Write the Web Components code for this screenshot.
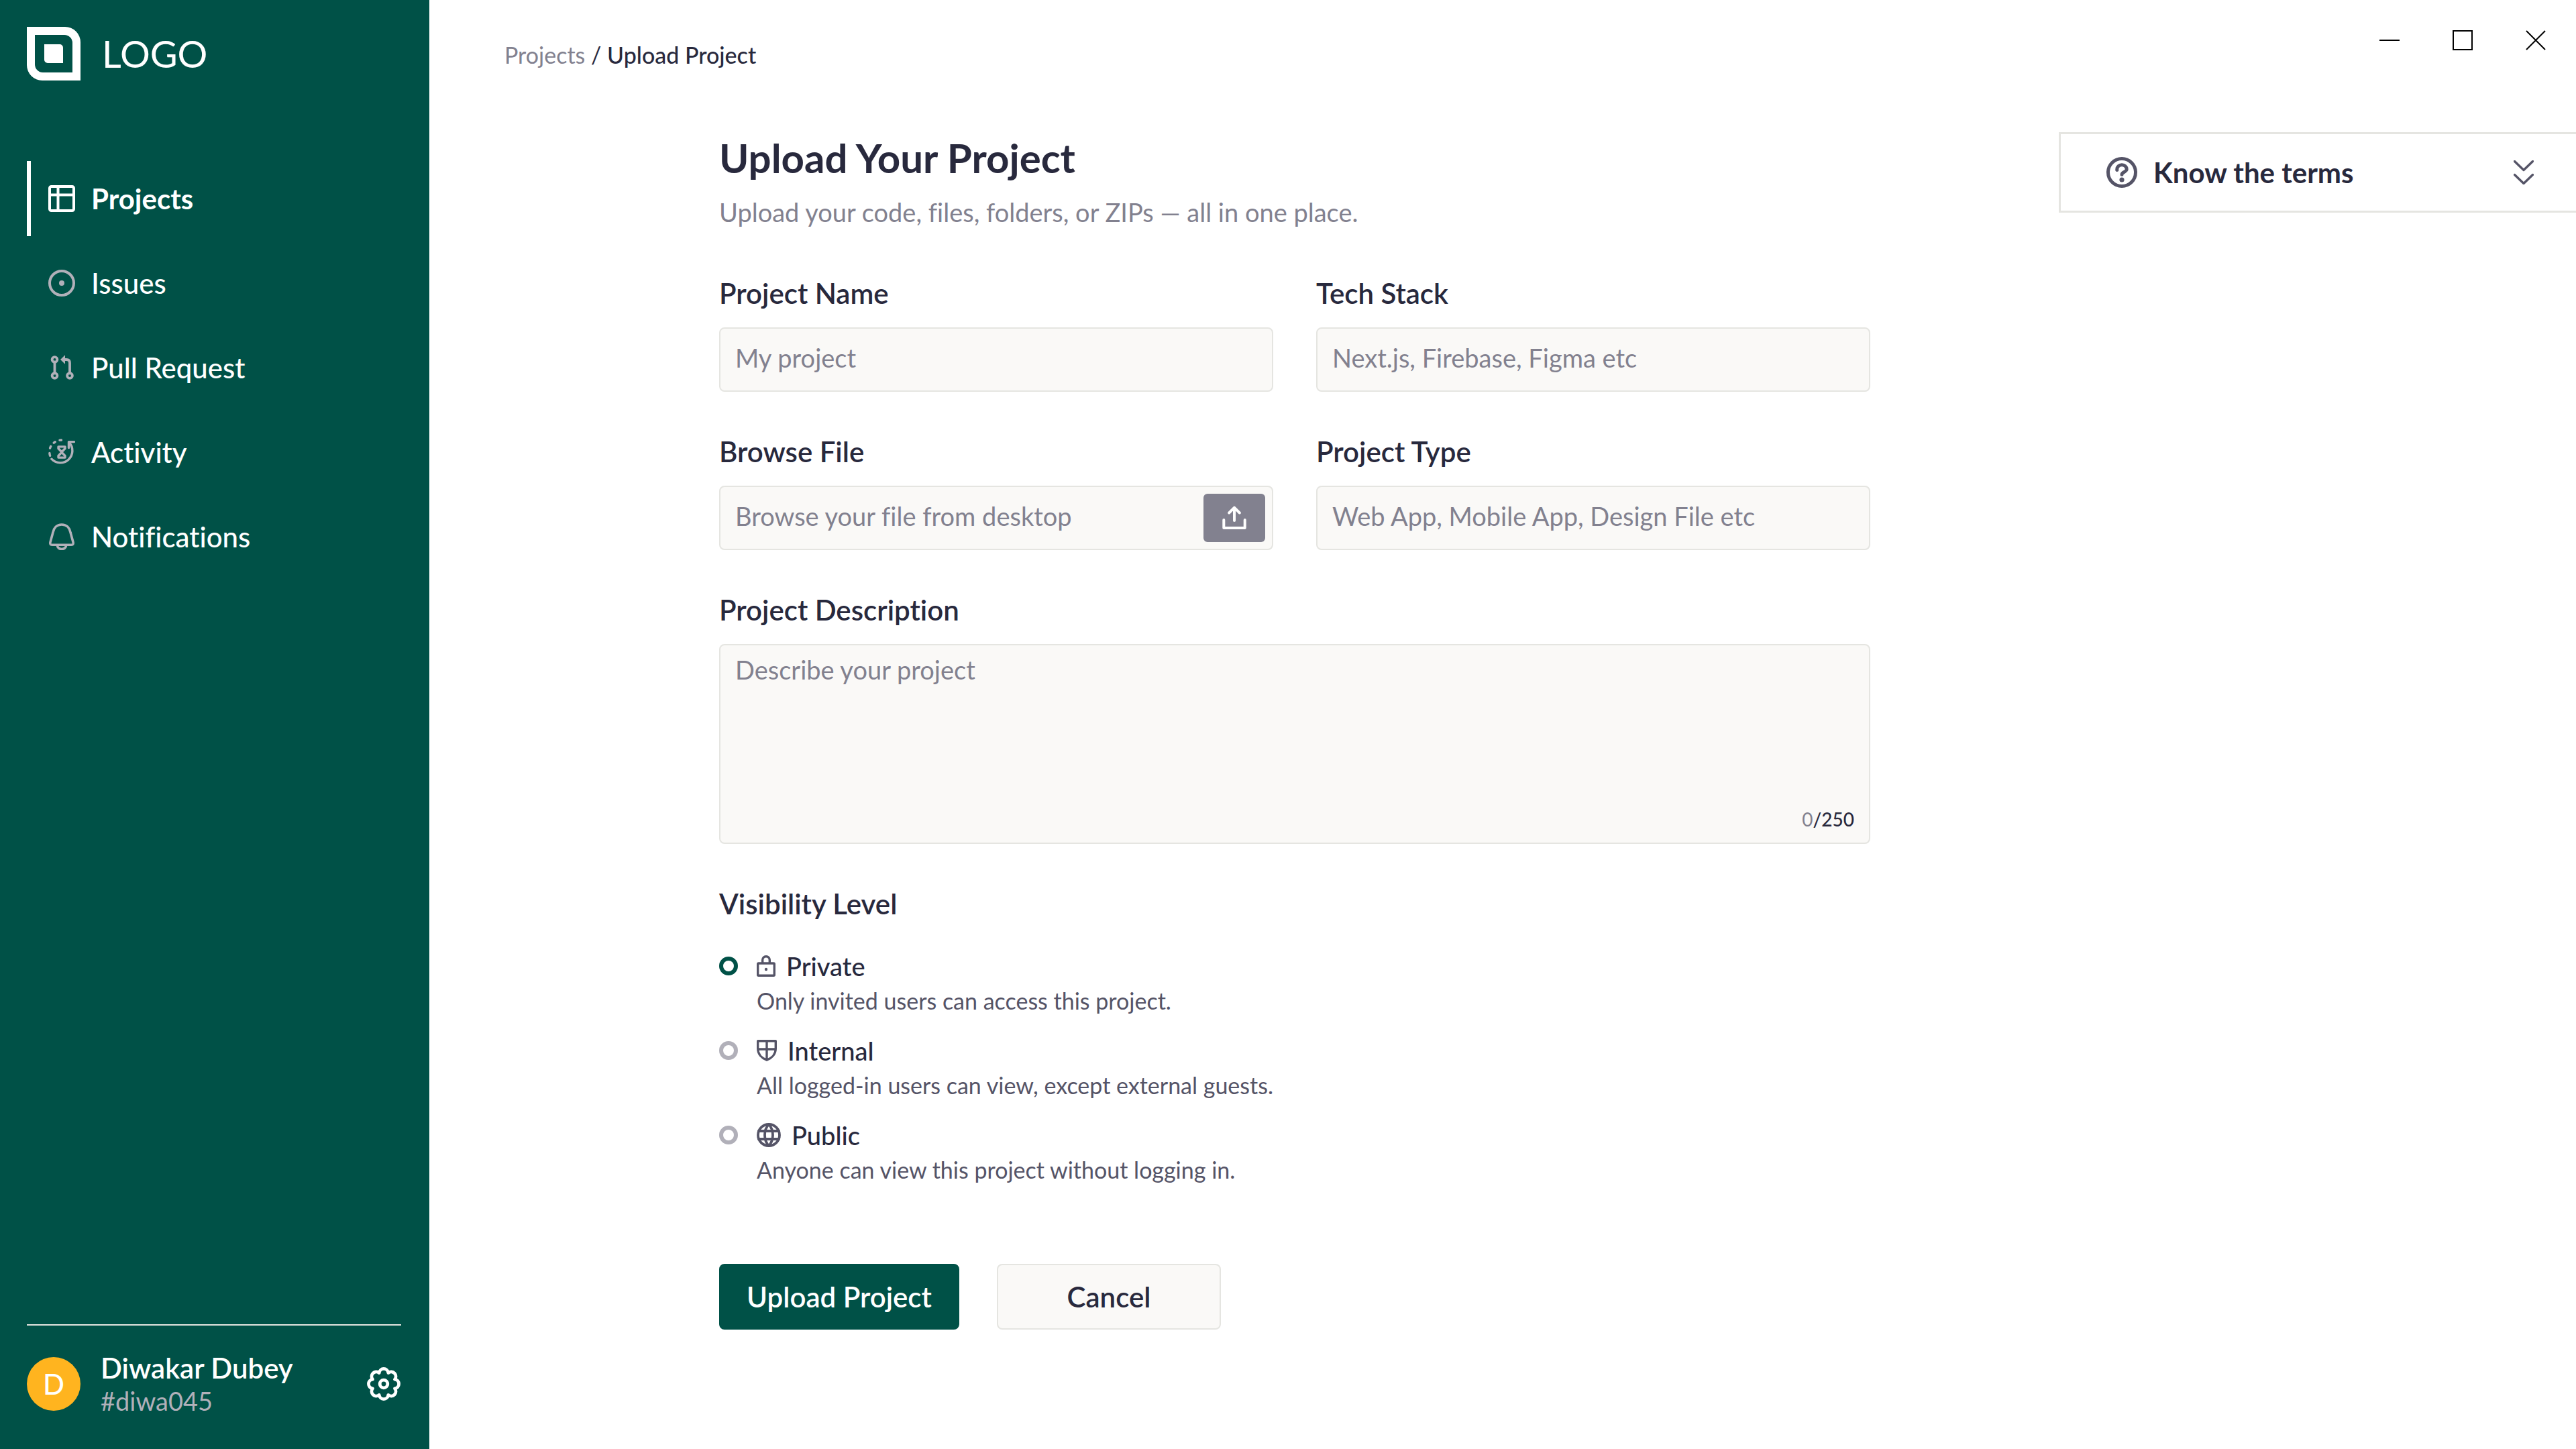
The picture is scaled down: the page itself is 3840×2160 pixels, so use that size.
<!DOCTYPE html>
<html lang="en">
<head>
<meta charset="utf-8">
<title>Upload Project</title>
<style>
  :root {
    --green: #005147;
    --ink: #28293d;
    --body: #555467;
    --muted: #82818f;
    --faint: #b1b0b9;
    --line: #e5e5e1;
    --fill: #faf9f7;
  }
  body { margin: 0; background: #fff; color: var(--ink); font-family: Lato, "Open Sans", sans-serif; font-variant-ligatures: none; }
</style>
</head>
<body>
<app-shell>
  <side-bar slot="side">
    <nav-item icon="projects" active>Projects</nav-item>
    <nav-item icon="issues">Issues</nav-item>
    <nav-item icon="pull">Pull Request</nav-item>
    <nav-item icon="activity">Activity</nav-item>
    <nav-item icon="bell">Notifications</nav-item>
    <user-card slot="footer" name="Diwakar Dubey" handle="#diwa045"></user-card>
  </side-bar>
  <top-bar slot="top"></top-bar>
  <project-form></project-form>
  <terms-panel slot="aside">Know the terms</terms-panel>
</app-shell>

<script>
const gearPath = (() => {
  const pts = [];
  for (let i = 0; i < 8; i++) {
    const a = (22.5 + 45 * i) * Math.PI / 180;
    pts.push((26 + 17.8 * Math.cos(a)).toFixed(2) + ' ' + (26 + 17.8 * Math.sin(a)).toFixed(2));
  }
  return 'M' + pts[7] + pts.map(p => 'A6.85 6.85 0 0 1 ' + p).join('') + 'Z';
})();

const ICONS = {
  logo: [80, 80, '<path fill="currentColor" fill-rule="evenodd" stroke="none" d="M0 0H57A23 23 0 0 1 80 23V80H23A23 23 0 0 1 0 57ZM12 12V56A12 12 0 0 0 24 68H68V24A12 12 0 0 0 56 12ZM26 26H49A5 5 0 0 1 54 31V54H31A5 5 0 0 1 26 49Z"/>'],
  projects: [40, 40, '<rect x="2" y="2" width="36" height="36" rx="2.5"/><path d="M14.500 2V38M2 14.500H38"/>', 4],
  issues: [40, 40, '<circle cx="20" cy="20" r="18"/><circle cx="20" cy="20" r="4" fill="currentColor" stroke="none"/>', 4],
  pull: [40, 40, '<circle cx="9.500" cy="8" r="3.900"/><circle cx="9.500" cy="32" r="3.900"/><circle cx="32" cy="32" r="3.900"/><path d="M9.500 11.500V28.500M24 8H27Q32 8 32 13V28.500"/><path d="M18 8L25 1.300V14.700Z" fill="currentColor" stroke="none"/>', 3.8],
  activity: [40, 40, '<path d="M4.800 30.200A18 18 0 1 0 31 5.500"/><path d="M38.500 4.600H30.500V13.500M1.900 21.500Q2 23.500 2.600 25.300M2.600 14Q3 12.500 3.700 11.400M8.300 6.200L10.200 4.700M17 2.100L19.500 2"/><path d="M15 11.900H25V14.500L20 19.700L15 14.500ZM15 28.100H25V25.500L20 20.300L15 25.500Z"/>', 3.4],
  bell: [40, 40, '<path d="M20 2C12.500 2 8.200 7 7 13.500L2.900 28.500Q2 32.200 5.600 32.200H34.400Q38 32.200 37.100 28.500L33 13.500C31.800 7 27.500 2 20 2Z"/><path d="M13.500 33.500A6.500 5 0 0 0 26.500 33.500"/>', 3.6],
  gear: [52, 52, '<path d="' + gearPath + '"/><circle cx="26" cy="26" r="5.800"/>', 4.8],
  minimize: [30, 30, '<path d="M0 15H30"/>', 2],
  maximize: [30, 30, '<path stroke-linejoin="miter" d="M1 1H29V29H1Z"/>', 2],
  close: [30, 30, '<path d="M1 1L29 29M29 1L1 29"/>', 2],
  help: [46, 46, '<circle cx="23" cy="23" r="20.500"/><path d="M15.800 19.500V18.200A7.200 6.500 0 0 1 30.200 18.200C30.200 22.500 23 22.500 23 26.300"/><circle cx="23" cy="34" r="3.600" fill="currentColor" stroke="none"/>', 5],
  chevrons: [30, 36, '<path d="M1.500 1.500L15 14.500L28.500 1.500M1.500 21.500L15 34.500L28.500 21.500"/>', 3.4],
  upload: [36, 36, '<path d="M2.300 21V33H33.700V21M18 3V22M10.200 10.500L18 2.700L25.800 10.500"/>', 4],
  lock: [28, 32, '<rect x="1.700" y="12" width="24.600" height="18.300" rx="1"/><path d="M8.700 11V7A5.300 5.300 0 0 1 19.300 7V11"/><circle cx="14" cy="21" r="2.200" fill="currentColor" stroke="none"/>', 3.4],
  shield: [30, 32, '<path d="M1.700 1.700H28.300V13C28.300 21.500 22.500 27.500 15 30.200C7.500 27.500 1.700 21.500 1.700 13ZM15 1.700V30M1.700 14H28.300"/>', 3.4],
  globe: [36, 36, '<circle cx="18" cy="18" r="16"/><path d="M3 12H33M3 24H33M18 2C10 10.500 10 25.500 18 34C26 25.500 26 10.500 18 2Z"/>', 3.8]
};
const icon = name => {
  const [w, h, body, sw = 0] = ICONS[name];
  return `<svg width="${w}" height="${h}" viewBox="0 0 ${w} ${h}" fill="none" stroke="currentColor" stroke-width="${sw}" stroke-linecap="${/minimize|close/.test(name) ? 'butt' : 'round'}" stroke-linejoin="round" aria-hidden="true">${body}</svg>`;
};

const BASE = `
  *, *::before { box-sizing: border-box; }
  svg { display: block; flex: none; }
  button, input, textarea { font: inherit; font-variant-ligatures: none; color: inherit; margin: 0; }
  button { cursor: pointer; background: none; border: 0; padding: 0; }
  a { color: inherit; text-decoration: none; }
`;
const define = (name, render) => customElements.define(name, class extends HTMLElement {
  connectedCallback() {
    if (this.shadowRoot) return;
    const [css, html] = render(this);
    this.attachShadow({ mode: 'open' }).innerHTML = `<style>${BASE}${css}</style>${html}`;
  }
});

define('app-shell', () => [`
  :host { display: flex; min-height: 100vh; }
  .page { flex: 1; min-width: 0; display: flex; flex-direction: column; }
  .body { display: flex; align-items: flex-start; gap: 281px; padding: 0 0 64px 432px; }
  main { flex: 1; min-width: 0; }
`, `
  <slot name="side"></slot>
  <div class="page">
    <slot name="top"></slot>
    <div class="body"><main><slot></slot></main><slot name="aside"></slot></div>
  </div>
`]);

define('side-bar', () => [`
  :host { display: flex; flex-direction: column; flex: none; width: 640px; padding: 40px 42px 0 40px; box-sizing: border-box; background: var(--green); color: #fff; }
  .brand { display: flex; align-items: center; gap: 32px; font-size: 56px; line-height: 80px; }
  nav { display: flex; flex-direction: column; gap: 14px; margin-top: 120px; }
  footer { margin-top: auto; border-top: 2px solid var(--line); padding: 38px 0 48px; }
`, `
  <div class="brand">${icon('logo')}<span>LOGO</span></div>
  <nav aria-label="Main"><slot></slot></nav>
  <footer><slot name="footer"></slot></footer>
`]);

define('nav-item', el => [`
  :host { display: block; }
  a { display: flex; align-items: center; gap: 24px; height: 112px; padding-left: 26px; border-left: 6px solid transparent; font-size: 42px; font-weight: 500; line-height: 50px; }
  svg { color: var(--faint); }
  :host([active]) a { border-color: #fff; font-weight: 700; }
  :host([active]) svg { color: #fff; }
`, `<a href="#"${el.hasAttribute('active') ? ' aria-current="page"' : ''}>${icon(el.getAttribute('icon'))}<span><slot></slot></span></a>`]);

define('user-card', el => [`
  :host { display: flex; align-items: center; gap: 30px; }
  .avatar { flex: none; width: 80px; height: 80px; border-radius: 50%; background: #ffb41f; font-size: 42px; font-weight: 500; line-height: 80px; text-align: center; }
  .who { flex: 1; min-width: 0; }
  .name { font-size: 42px; font-weight: 600; line-height: 50px; }
  .handle { font-size: 38px; line-height: 48px; color: var(--faint); }
`, `
  <div class="avatar">${el.getAttribute('name')[0]}</div>
  <div class="who"><div class="name">${el.getAttribute('name')}</div><div class="handle">${el.getAttribute('handle')}</div></div>
  <button type="button" aria-label="Settings">${icon('gear')}</button>
`]);

define('top-bar', () => [`
  :host { display: flex; align-items: flex-start; justify-content: space-between; height: 197px; padding: 45px 45px 0 112px; box-sizing: border-box; }
  nav { padding-top: 17px; font-size: 34px; line-height: 40px; }
  nav a { color: var(--muted); }
  nav span { font-weight: 500; }
  .controls { display: flex; gap: 79px; color: #000; }
`, `
  <nav aria-label="Breadcrumb"><a href="#">Projects</a> / <span>Upload Project</span></nav>
  <div class="controls">
    <button type="button" aria-label="Minimize">${icon('minimize')}</button>
    <button type="button" aria-label="Maximize">${icon('maximize')}</button>
    <button type="button" aria-label="Close">${icon('close')}</button>
  </div>
`]);

define('terms-panel', () => [`
  :host { display: block; flex: none; width: 771px; }
  button { display: flex; align-items: center; gap: 24px; width: 100%; height: 120px; padding: 0 63px 0 68px; border: 3px solid var(--line); border-right: 0; background: #fff; color: var(--body); font-size: 42px; font-weight: 700; line-height: 50px; text-align: left; }
  span { flex: 1; color: var(--ink); }
`, `<button type="button" aria-expanded="false">${icon('help')}<span><slot></slot></span>${icon('chevrons')}</button>`]);

define('form-field', el => [`
  :host { display: block; }
  label { display: block; margin-bottom: 26px; font-size: 42px; font-weight: 600; line-height: 50px; }
  .box { display: flex; align-items: center; position: relative; border: 2px solid var(--line); border-radius: 8px; background: var(--fill); font-size: 38px; line-height: 46px; }
  input, textarea { flex: 1; min-width: 0; border: 0; outline: 0; background: none; resize: none; }
  input { height: 92px; padding: 0 22px 6px; }
  textarea { height: 294px; padding: 13px 22px; }
  ::placeholder { color: var(--muted); opacity: 1; }
  .count { position: absolute; right: 22px; bottom: 18px; font-size: 28px; font-weight: 500; line-height: 34px; }
  .count span { color: var(--muted); font-weight: 400; }
`, `
  <label for="control">${el.getAttribute('label')}</label>
  <div class="box">${el.hasAttribute('limit')
    ? `<textarea id="control" maxlength="${el.getAttribute('limit')}" placeholder="${el.getAttribute('hint')}"></textarea><div class="count"><span>0</span>/${el.getAttribute('limit')}</div>`
    : `<input id="control" type="text" placeholder="${el.getAttribute('hint')}"><slot name="action"></slot>`}</div>
`]);

define('browse-button', () => [`
  :host { display: block; flex: none; margin-right: 10px; }
  button { display: flex; align-items: center; justify-content: center; width: 92px; height: 72px; border-radius: 6px; background: var(--muted); color: #fff; }
`, `<button type="button" aria-label="Browse files">${icon('upload')}</button>`]);

const LEVELS = [
  ['private', 'lock', 'Private', 'Only invited users can access this project.'],
  ['internal', 'shield', 'Internal', 'All logged-in users can view, except external guests.'],
  ['public', 'globe', 'Public', 'Anyone can view this project without logging in.']
];
define('visibility-options', () => [`
  :host { display: block; }
  fieldset { margin: 0; border: 0; padding: 0; display: flex; flex-direction: column; gap: 32px; }
  legend { padding: 0; margin-bottom: 46px; font-size: 42px; font-weight: 600; line-height: 50px; }
  .option { display: grid; grid-template-columns: 28px 1fr; column-gap: 28px; row-gap: 10px; align-items: center; }
  input { appearance: none; width: 28px; height: 28px; border: 6px solid var(--faint); border-radius: 50%; }
  input:checked { border-color: var(--green); }
  label { display: flex; align-items: center; gap: 16px; font-size: 38px; font-weight: 500; line-height: 44px; height: 44px; }
  svg { color: var(--body); }
  p { grid-column: 2; margin: 0; font-size: 34px; line-height: 40px; color: var(--body); }
`, `
  <fieldset><legend>Visibility Level</legend>
  ${LEVELS.map(([id, ic, name, note], i) => `
    <div class="option">
      <input type="radio" name="visibility" id="${id}" aria-describedby="${id}-note"${i ? '' : ' checked'}>
      <label for="${id}">${icon(ic)}<span>${name}</span></label>
      <p id="${id}-note">${note}</p>
    </div>`).join('')}
  </fieldset>
`]);

define('action-button', () => [`
  :host { display: block; }
  button { height: 98px; padding: 0 38px; border: 2px solid var(--line); border-radius: 8px; background: var(--fill); color: var(--ink); font-size: 42px; font-weight: 600; line-height: 50px; min-width: 334px; }
  :host([primary]) button { min-width: 358px; background: var(--green); border-color: var(--green); color: #fff; }
`, `<button type="button"><slot></slot></button>`]);

define('project-form', () => [`
  :host { display: block; padding-top: 6px; }
  h1 { margin: 0 0 25px; font-size: 60px; font-weight: 700; line-height: 64px; }
  .lead { margin: 0 0 72px; font-size: 38px; line-height: 48px; color: var(--muted); }
  .fields { display: grid; grid-template-columns: 1fr 1fr; gap: 64px; }
  .wide { grid-column: 1 / -1; }
  .actions { display: flex; gap: 56px; margin-top: 120px; }
`, `
  <h1>Upload Your Project</h1>
  <p class="lead">Upload your code, files, folders, or ZIPs — all in one place.</p>
  <div class="fields">
    <form-field label="Project Name" hint="My project"></form-field>
    <form-field label="Tech Stack" hint="Next.js, Firebase, Figma etc"></form-field>
    <form-field label="Browse File" hint="Browse your file from desktop"><browse-button slot="action"></browse-button></form-field>
    <form-field label="Project Type" hint="Web App, Mobile App, Design File etc"></form-field>
    <form-field class="wide" label="Project Description" hint="Describe your project" limit="250"></form-field>
    <visibility-options class="wide"></visibility-options>
  </div>
  <div class="actions">
    <action-button primary>Upload Project</action-button>
    <action-button>Cancel</action-button>
  </div>
`]);
</script>
</body>
</html>
